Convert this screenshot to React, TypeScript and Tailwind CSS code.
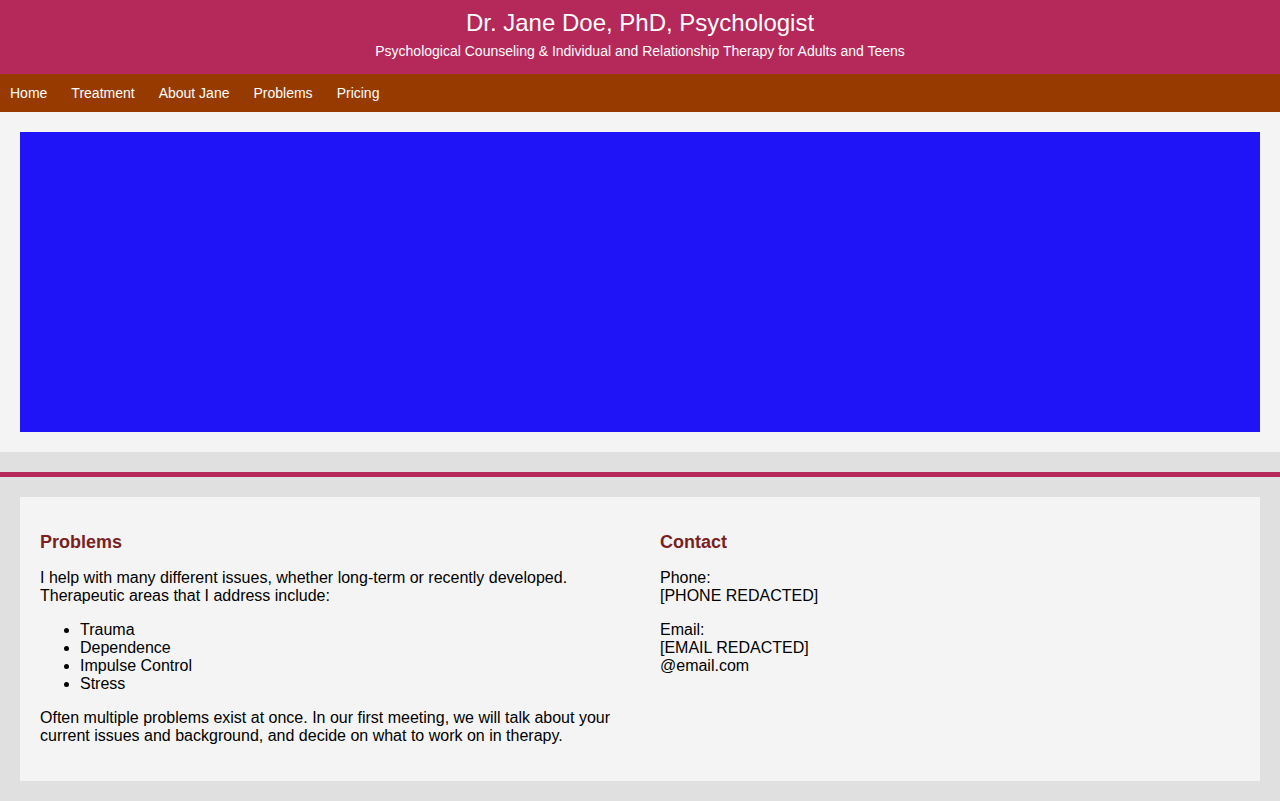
export default function App() {
  const font = { fontFamily: '"Liberation Sans", Arial, Helvetica, sans-serif' };
  return (
    <div style={font} className="bg-[#e0e0e0] text-black leading-[18px] min-h-[801px]">
      <header className="bg-[#b5285a] text-white text-center pt-[9px] pb-[15px]">
        <h1 className="text-[24px] leading-[28px] font-normal">Dr. Jane Doe, PhD, Psychologist</h1>
        <p className="text-[14px] leading-[16px] mt-[6px]">
          Psychological Counseling &amp; Individual and Relationship Therapy for Adults and Teens
        </p>
      </header>
      <nav className="bg-[#963a00] h-[38px] flex items-center pl-[10px] gap-[24px] text-white text-[14px]">
        <a>Home</a>
        <a>Treatment</a>
        <a>About Jane</a>
        <a>Problems</a>
        <a>Pricing</a>
      </nav>
      <section className="bg-[#f4f4f4] p-5">
        <div className="bg-[#1f14f8] h-[300px]" />
      </section>
      <div className="h-5" />
      <div className="h-[5px] bg-[#b5285a]" />
      <div className="p-5">
        <div className="bg-[#f4f4f4] px-5 pt-5 pb-[20px] grid grid-cols-2">
          <div className="pr-5">
            <h3 className="mt-[15px] text-[18px] leading-[20px] font-bold text-[#7a1f22]">Problems</h3>
            <p className="mt-[17px]">
              I help with many different issues, whether long-term or recently developed. Therapeutic areas that I address include:
            </p>
            <ul className="mt-4 pl-10 list-disc">
              <li>Trauma</li>
              <li>Dependence</li>
              <li>Impulse Control</li>
              <li>Stress</li>
            </ul>
            <p className="mt-4 mb-4">
              Often multiple problems exist at once. In our first meeting, we will talk about your current issues and background, and decide on what to work on in therapy.
            </p>
          </div>
          <div className="pl-5">
            <h3 className="mt-[15px] text-[18px] leading-[20px] font-bold text-[#7a1f22]">Contact</h3>
            <p className="mt-[17px]">
              Phone:
              <br />
              [PHONE REDACTED]
            </p>
            <p className="mt-4">
              Email:
              <br />
              [EMAIL REDACTED]
              <br />
              @email.com
            </p>
          </div>
        </div>
      </div>
    </div>
  );
}
